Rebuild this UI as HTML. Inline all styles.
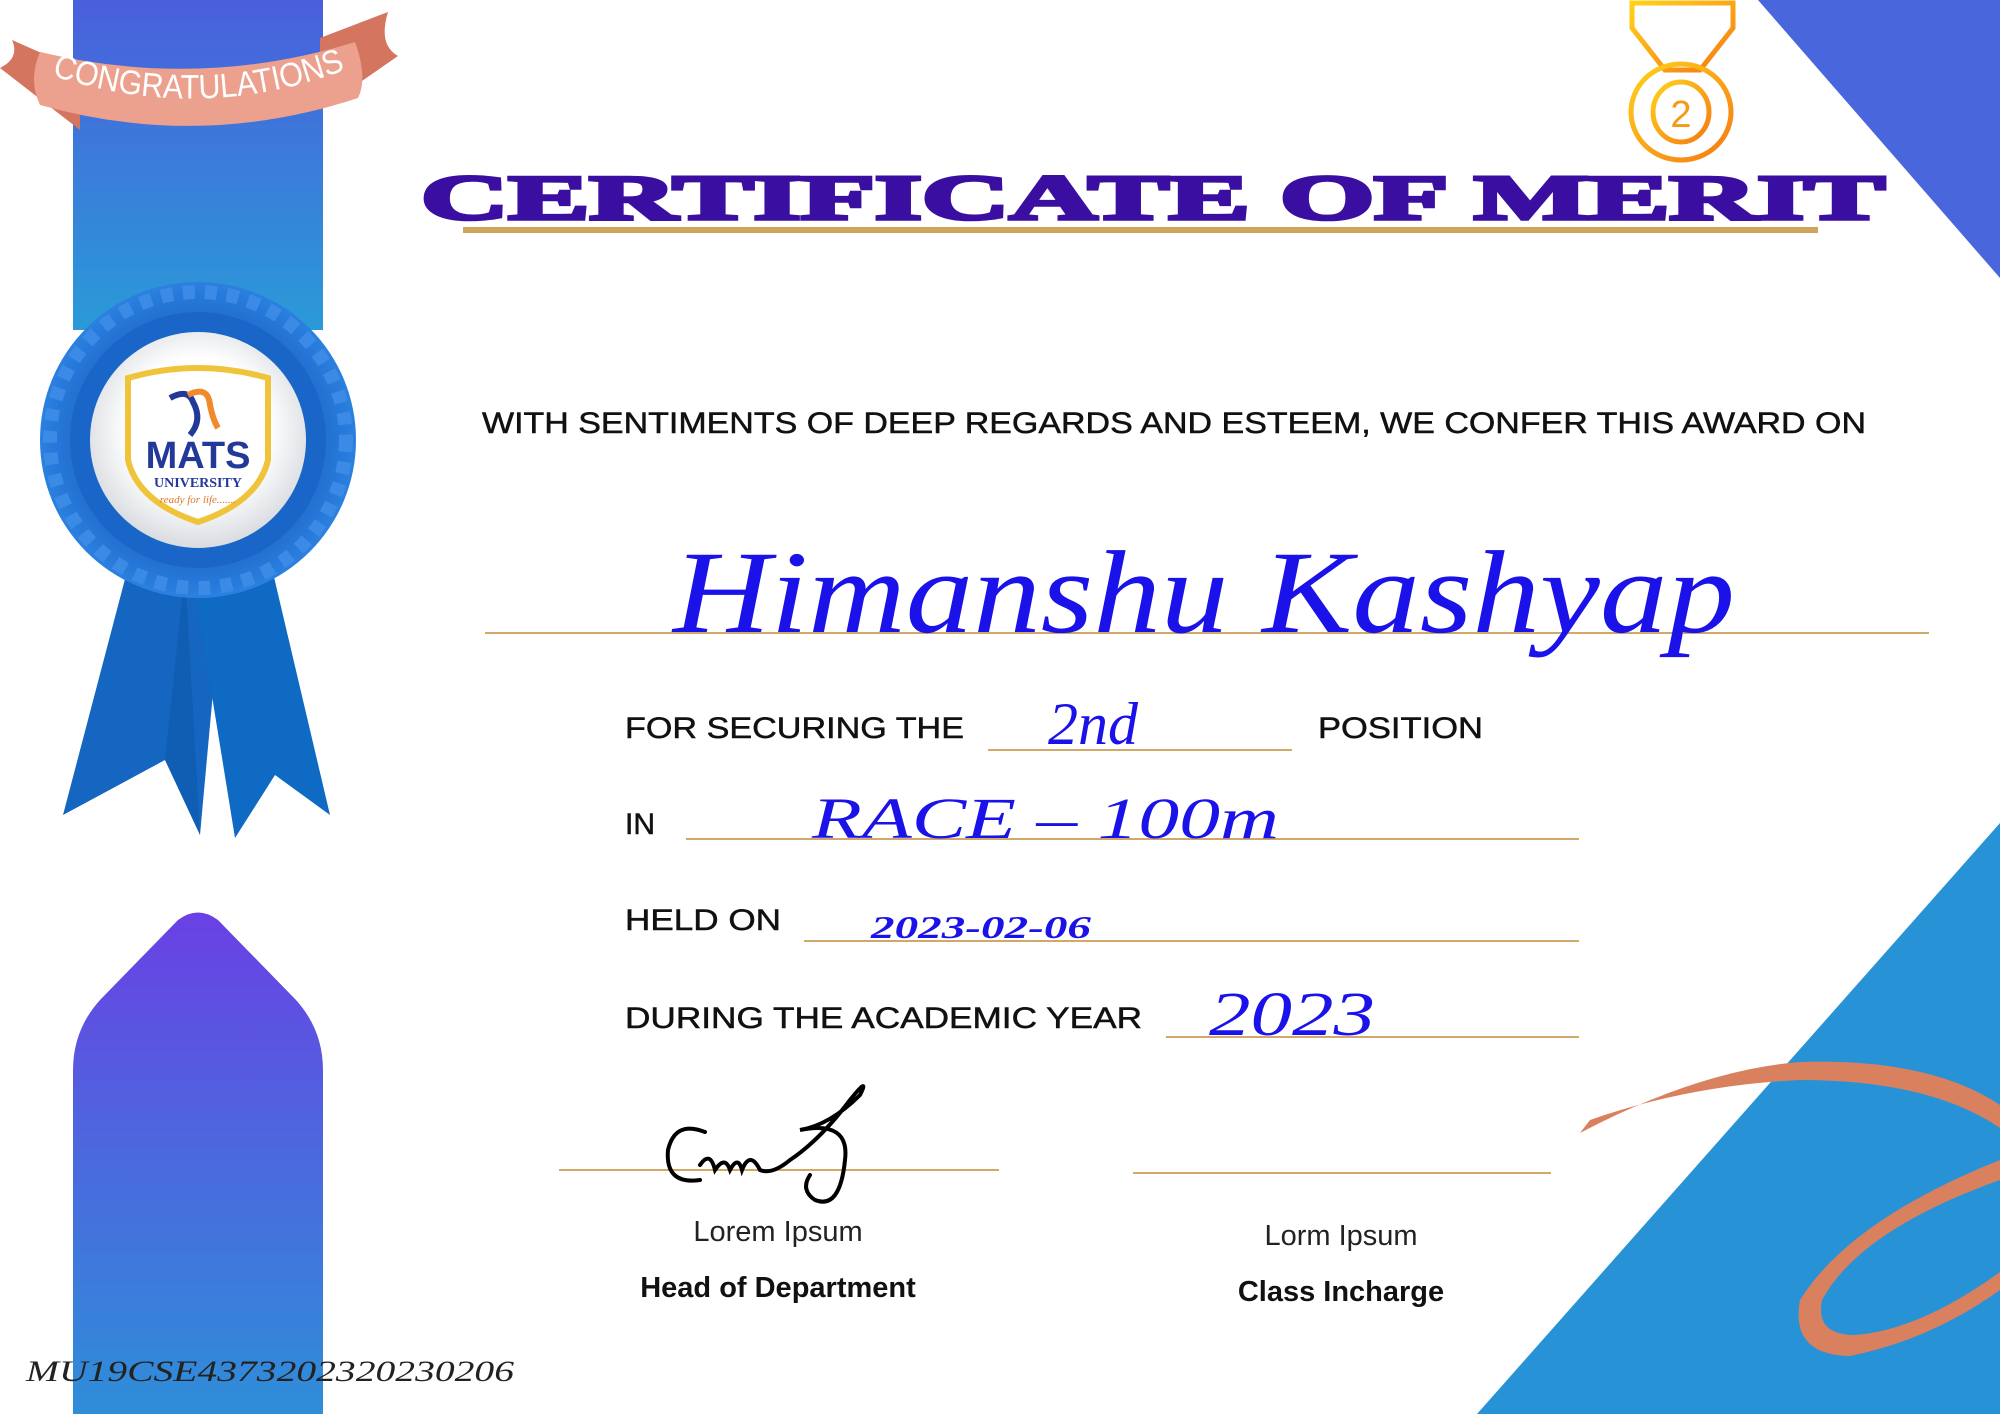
<!DOCTYPE html>
<html><head><meta charset="utf-8"><style>
html,body{margin:0;padding:0;background:#fff;}
svg{display:block}
</style></head><body>
<svg width="2000" height="1414" viewBox="0 0 2000 1414" xmlns="http://www.w3.org/2000/svg">
<defs>
<linearGradient id="strip" x1="0" y1="0" x2="0" y2="1"><stop offset="0" stop-color="#4a5fdc"/><stop offset="1" stop-color="#2a9ad8"/></linearGradient>
<linearGradient id="pent" x1="0" y1="0" x2="0" y2="1"><stop offset="0" stop-color="#6a40e4"/><stop offset="0.5" stop-color="#4a6ade"/><stop offset="1" stop-color="#2e8ed8"/></linearGradient>
<linearGradient id="medal" x1="0" y1="0" x2="1" y2="1"><stop offset="0" stop-color="#ffd21a"/><stop offset="1" stop-color="#f57a14"/></linearGradient>
<radialGradient id="ros" cx="0.5" cy="0.5" r="0.5"><stop offset="0.6" stop-color="#1a5fc0"/><stop offset="1" stop-color="#2a80e0"/></radialGradient>
<radialGradient id="wc" cx="0.5" cy="0.45" r="0.55"><stop offset="0.6" stop-color="#ffffff"/><stop offset="1" stop-color="#d8dbe0"/></radialGradient>
</defs>

<polygon points="1758,0 2000,0 2000,278" fill="#4a66dd"/>
<polygon points="2000,823 2000,1414 1477,1414" fill="#2892d6"/>

<rect x="73" y="0" width="250" height="330" fill="url(#strip)"/>
<path d="M73,1414 L73,1070 Q73,1030 100,1000 L178,920 Q198,905 218,920 L296,1000 Q323,1030 323,1070 L323,1414 Z" fill="url(#pent)"/>

<path d="M130,560 L150,560 L225,560 L200,835 L165,760 L63,815 Z" fill="#1466c0"/>
<path d="M190,560 L270,560 L330,815 L275,775 L235,838 Z" fill="#0f6ac4"/>
<path d="M185,570 L200,835 L165,760 Z" fill="#0a55a8" opacity="0.5"/>

<g transform="translate(198,440)">
<circle r="158" fill="url(#ros)"/>
<circle r="148" fill="none" stroke="#3a8ae6" stroke-width="14" stroke-dasharray="12 10"/>
<circle r="128" fill="#1a66c8"/>
<circle r="108" fill="url(#wc)"/>
<path d="M-70,-62 Q0,-82 70,-62 L70,20 Q60,62 0,82 Q-60,62 -70,20 Z" fill="#fff" stroke="#f0c43a" stroke-width="6"/>
<path d="M-28,-42 Q-10,-52 -5,-38 Q5,-20 -8,-5" fill="none" stroke="#23399a" stroke-width="6"/>
<path d="M-10,-45 Q10,-55 12,-35 Q15,-20 20,-12" fill="none" stroke="#f08a2a" stroke-width="6"/>
<text x="0" y="28" font-family="Liberation Sans, sans-serif" font-weight="bold" font-size="38" fill="#23399a" text-anchor="middle">MATS</text>
<text x="0" y="47" font-family="Liberation Serif, serif" font-weight="bold" font-size="14" fill="#23399a" text-anchor="middle">UNIVERSITY</text>
<text x="0" y="63" font-family="Liberation Serif, serif" font-style="italic" font-size="11" fill="#e0772a" text-anchor="middle">ready for life.......</text>
</g>

<path d="M12,40 L80,70 L80,130 L0,68 Q20,58 12,40 Z" fill="#d47560"/>
<path d="M388,12 L320,38 L320,110 L398,56 Q378,45 388,12 Z" fill="#d47560"/>
<path d="M40,52 Q200,90 355,42 Q368,78 358,98 Q200,150 40,105 Q28,80 40,52 Z" fill="#eca08e"/>
<path id="bp" d="M42,72 Q200,128 355,66" fill="none"/>
<text font-family="Liberation Sans, sans-serif" font-size="34" fill="#fff">
<textPath href="#bp" startOffset="50%" text-anchor="middle" textLength="300" lengthAdjust="spacingAndGlyphs">CONGRATULATIONS</textPath></text>

<g fill="none" stroke="url(#medal)" stroke-width="5">
<path d="M1632,3 L1733,3 L1733,28 L1700,70 L1665,70 L1632,28 Z"/>
<line x1="1652" y1="5" x2="1652" y2="38"/><line x1="1670" y1="5" x2="1670" y2="55"/><line x1="1695" y1="5" x2="1695" y2="55"/><line x1="1713" y1="5" x2="1713" y2="38"/>
<ellipse cx="1681" cy="112" rx="50" ry="48"/>
<ellipse cx="1681" cy="112" rx="28" ry="30"/>
</g>
<text x="1681" y="127" font-family="Liberation Sans, sans-serif" font-size="38" fill="#f59a14" text-anchor="middle">2</text>

<path d="M1580,1133 Q1700,1070 1800,1062 Q1930,1058 2000,1105 L2000,1128 Q1930,1080 1800,1080 Q1690,1085 1590,1120 Z" fill="#d9805f"/>
<path d="M2000,1160 Q1850,1220 1800,1300 Q1790,1355 1850,1356 Q1930,1340 2000,1290 L2000,1272 Q1920,1330 1855,1335 Q1815,1335 1822,1300 Q1860,1230 2000,1180 Z" fill="#d9805f"/>

<text x="421" y="219" font-family="Liberation Serif, serif" font-weight="bold" font-size="64" fill="#3a0ea0" textLength="1464" lengthAdjust="spacingAndGlyphs" stroke="#3a0ea0" stroke-width="3.5">CERTIFICATE OF MERIT</text>
<rect x="463" y="227" width="1355" height="6" fill="#cfa55e"/>

<g font-family="Liberation Sans, sans-serif" fill="#111">
<text x="482" y="433" font-size="30" textLength="1384" lengthAdjust="spacingAndGlyphs" stroke="#111" stroke-width="0.5">WITH SENTIMENTS OF DEEP REGARDS AND ESTEEM, WE CONFER THIS AWARD ON</text>
<text x="625" y="738" font-size="30" textLength="339" lengthAdjust="spacingAndGlyphs" stroke="#111" stroke-width="0.5">FOR SECURING THE</text>
<text x="1318" y="738" font-size="30" textLength="165" lengthAdjust="spacingAndGlyphs" stroke="#111" stroke-width="0.5">POSITION</text>
<text x="625" y="834" font-size="30" stroke="#111" stroke-width="0.5">IN</text>
<text x="625" y="930" font-size="30" textLength="156" lengthAdjust="spacingAndGlyphs" stroke="#111" stroke-width="0.5">HELD ON</text>
<text x="625" y="1028" font-size="30" textLength="517" lengthAdjust="spacingAndGlyphs" stroke="#111" stroke-width="0.5">DURING THE ACADEMIC YEAR</text>
<text x="778" y="1241" font-size="29" text-anchor="middle" fill="#222">Lorem Ipsum</text>
<text x="778" y="1297" font-size="29" font-weight="bold" text-anchor="middle">Head of Department</text>
<text x="1341" y="1245" font-size="29" text-anchor="middle" fill="#222">Lorm Ipsum</text>
<text x="1341" y="1301" font-size="29" font-weight="bold" text-anchor="middle">Class Incharge</text>
</g>

<g fill="#cfa86a">
<rect x="485" y="632" width="1444" height="2"/>
<rect x="988" y="749" width="304" height="2"/>
<rect x="686" y="838" width="893" height="2"/>
<rect x="804" y="940" width="775" height="2"/>
<rect x="1166" y="1036" width="413" height="2"/>
<rect x="559" y="1169" width="440" height="2"/>
<rect x="1133" y="1172" width="418" height="2"/>
</g>

<g font-family="Liberation Serif, serif" font-style="italic" fill="#1a12e8">
<text x="673" y="632" font-size="118" textLength="1062" lengthAdjust="spacingAndGlyphs">Himanshu Kashyap</text>
<text x="1048" y="744" font-size="60">2nd</text>
<text x="812" y="838" font-size="58" textLength="467" lengthAdjust="spacingAndGlyphs">RACE – 100m</text>
<text x="871" y="938" font-size="32" font-weight="bold" textLength="220" lengthAdjust="spacingAndGlyphs">2023-02-06</text>
<text x="1209" y="1035" font-size="62" textLength="166" lengthAdjust="spacingAndGlyphs">2023</text>
</g>

<path d="M705,1132 Q675,1120 668,1150 Q665,1185 700,1180 M700,1165 Q710,1150 715,1170 Q725,1155 730,1170 Q738,1155 742,1170 Q750,1150 760,1170 Q772,1175 790,1160 Q820,1140 850,1100 Q870,1075 860,1095 Q830,1125 800,1130 Q850,1120 845,1160 Q840,1210 815,1200 Q800,1190 810,1175" fill="none" stroke="#000" stroke-width="4" stroke-linecap="round"/>

<text x="26" y="1381" font-family="Liberation Serif, serif" font-style="italic" font-size="30" fill="#222" textLength="488" lengthAdjust="spacingAndGlyphs">MU19CSE4373202320230206</text>
</svg>
</body></html>
